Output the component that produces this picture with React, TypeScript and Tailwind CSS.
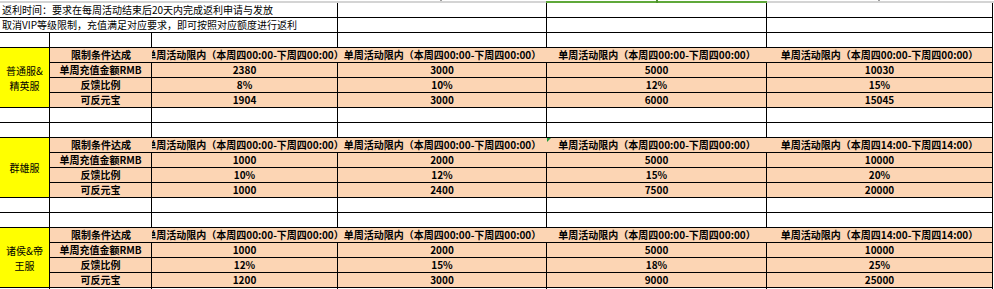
import React from "react";

const PEACH = "bg-[#fcd5b4]";

type Block = {
  name: string[];
  headers: string[];
  rows: [string, string[]][];
  mark?: boolean;
};

const h0 = "单周活动限内（本周四00:00-下周四00:00）";
const h14 = "单周活动限内（本周四14:00-下周四14:00）";

const blocks: Block[] = [
  {
    name: ["普通服&", "精英服"],
    headers: [h0, h0, h0, h0],
    rows: [
      ["单周充值金额RMB", ["2380", "3000", "5000", "10030"]],
      ["反馈比例", ["8%", "10%", "12%", "15%"]],
      ["可反元宝", ["1904", "3000", "6000", "15045"]],
    ],
  },
  {
    name: ["群雄服"],
    headers: [h0, h0, h0, h14],
    rows: [
      ["单周充值金额RMB", ["1000", "2000", "5000", "10000"]],
      ["反馈比例", ["10%", "12%", "15%", "20%"]],
      ["可反元宝", ["1000", "2400", "7500", "20000"]],
    ],
    mark: true,
  },
  {
    name: ["诸侯&帝", "王服"],
    headers: [h0, h0, h0, h14],
    rows: [
      ["单周充值金额RMB", ["1000", "2000", "5000", "10000"]],
      ["反馈比例", ["12%", "15%", "18%", "25%"]],
      ["可反元宝", ["1200", "3000", "9000", "25000"]],
    ],
  },
];

function Blank() {
  return (
    <>
      {[0, 1, 2, 3, 4, 5].map((i) => (
        <div key={i} className="border-r border-b border-black" />
      ))}
    </>
  );
}

function BlockRows({ b }: { b: Block }) {
  return (
    <>
      <div className="row-span-4 bg-[#ffff00] border-r border-b border-black flex flex-col items-center justify-center leading-[15px] text-center">
        {b.name.map((n) => (
          <div key={n}>{n}</div>
        ))}
      </div>
      <div className={`${PEACH} border-b border-black flex items-center justify-center font-bold overflow-hidden whitespace-nowrap`}>
        限制条件达成
      </div>
      {b.headers.map((h, i) => (
        <div
          key={i}
          className={`${PEACH} relative border-b border-black flex items-center justify-center font-bold overflow-hidden whitespace-nowrap ${
            i === 3 ? "border-r" : ""
          }`}
        >
          <span className="shrink-0">{h}</span>
          {b.mark && i === 2 ? (
            <span className="absolute left-0 top-0 w-0 h-0 border-t-[4px] border-t-[#1e9a3c] border-r-[4px] border-r-transparent" />
          ) : null}
        </div>
      ))}
      {b.rows.map(([label, vals]) => (
        <React.Fragment key={label}>
          <div className={`${PEACH} border-r border-b border-black flex items-center justify-center font-bold whitespace-nowrap overflow-hidden`}>
            {label}
          </div>
          {vals.map((v, i) => (
            <div
              key={i}
              className={`${PEACH} border-r border-b border-black flex items-center justify-center font-bold`}
            >
              {v}
            </div>
          ))}
        </React.Fragment>
      ))}
    </>
  );
}

export default function App() {
  return (
    <div
      className="w-[994px] bg-white text-black text-[10px] leading-[14px] overflow-hidden"
      style={{ fontFamily: '"Noto Sans CJK SC", "Noto Sans", sans-serif' }}
    >
      <div className="h-[3px] pt-[1px] flex relative">
        <div className="w-[546px] h-[2px] bg-[#d4d4d4]" />
        <div className="w-[221px] h-[2px] bg-[#5fa83a]" />
        <div className="flex-1 h-[2px] bg-[#d4d4d4]" />
        <span className="absolute left-[656px] top-0 w-[2px] h-[3px] bg-[#4e9230]" />
        <span className="absolute left-[440px] top-0 w-[2px] h-[1px] bg-[#a0a0a0]" />
        <span className="absolute left-[878px] top-0 w-[2px] h-[1px] bg-[#a0a0a0]" />
      </div>
      <div className="grid grid-cols-[50px_102px_186px_209px_220px_226px] auto-rows-[15px]">
        <div className="col-span-3 border-r border-b border-black pl-[2px] flex items-center whitespace-nowrap">
          返利时间：要求在每周活动结束后20天内完成返利申请与发放
        </div>
        <div className="border-r border-b border-black" />
        <div className="border-r border-b border-black" />
        <div className="border-r border-b border-black" />
        <div className="col-span-3 border-r border-b border-black pl-[2px] flex items-center whitespace-nowrap">
          取消VIP等级限制，充值满足对应要求，即可按照对应额度进行返利
        </div>
        <div className="border-r border-b border-black" />
        <div className="border-r border-b border-black" />
        <div className="border-r border-b border-black" />
        <Blank />
        <BlockRows b={blocks[0]} />
        <Blank />
        <Blank />
        <BlockRows b={blocks[1]} />
        <Blank />
        <Blank />
        <BlockRows b={blocks[2]} />
        <Blank />
      </div>
    </div>
  );
}
